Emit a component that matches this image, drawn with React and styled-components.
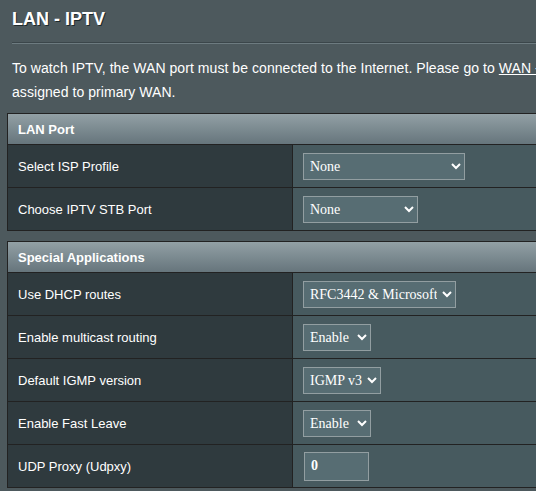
import React from "react";
import styled, { createGlobalStyle } from "styled-components";

const Global = createGlobalStyle`
  html, body {
    margin: 0;
    padding: 0;
    background: #4d595d;
    overflow: hidden;
  }
  body {
    font-family: "Liberation Sans", Arial, sans-serif;
    color: #ffffff;
  }
`;

const Page = styled.div`
  width: 760px;
  padding: 8px 0 0 7px;
  box-sizing: border-box;
`;

const Title = styled.div`
  margin-left: 5px;
  font-size: 18px;
  line-height: 23px;
  font-weight: bold;
  text-shadow: 1px 1px 0 #1f2a2d;
`;

const SplitLine = styled.div`
  margin: 11px 0 0 5px;
  height: 1px;
  background: #3b464a;
  border-bottom: 1px solid #6d7b80;
`;

const Intro = styled.div`
  margin: 12px 0 9px 5px;
  font-size: 14px;
  letter-spacing: 0.06px;
  line-height: 24px;
  white-space: nowrap;

  a {
    color: #ffffff;
    text-decoration: underline;
  }
`;

const FormTable = styled.div`
  width: 712px;
  border: 1px solid #222;
  margin-bottom: 10px;
`;

const Head = styled.div`
  height: 30px;
  display: flex;
  align-items: center;
  padding-left: 10px;
  font-size: 13px;
  font-weight: bold;
  background: linear-gradient(#92a0a5 0%, #66757c 100%);
  border-bottom: 1px solid #222;
`;

const Row = styled.div`
  display: grid;
  grid-template-columns: 285px 1fr;
  min-height: 42px;
  border-bottom: 1px solid #222;

  &:last-child {
    border-bottom: none;
  }
`;

const Label = styled.div`
  display: flex;
  align-items: center;
  padding-left: 10px;
  background: #2f3a3e;
  border-right: 1px solid #222;
  font-size: 13px;
`;

const Value = styled.div`
  display: flex;
  align-items: center;
  padding-left: 10px;
  background: #475a5f;
`;

const Select = styled.select`
  width: ${(p) => p.$w}px;
  height: 27px;
  margin: 0;
  padding: 0 2px;
  background-color: #576d73;
  border: 1px solid #929ea1;
  border-radius: 0;
  color: #ffffff;
  font-family: "Liberation Serif", "Times New Roman", serif;
  font-size: 14px;
  outline: none;
`;

const TextInput = styled.input`
  width: 65px;
  height: 29px;
  box-sizing: border-box;
  margin: 0 0 0 1px;
  padding: 0 6px;
  background-color: #576d73;
  border: 1px solid #929ea1;
  color: #ffffff;
  font-family: "Liberation Serif", "Times New Roman", serif;
  font-size: 14px;
  font-weight: bold;
  outline: none;
`;

const lanRows = [
  { label: "Select ISP Profile", value: "None", w: 162 },
  { label: "Choose IPTV STB Port", value: "None", w: 115 },
];

const specialRows = [
  { label: "Use DHCP routes", value: "RFC3442 & Microsoft", w: 153 },
  { label: "Enable multicast routing", value: "Enable", w: 68 },
  { label: "Default IGMP version", value: "IGMP v3", w: 78 },
  { label: "Enable Fast Leave", value: "Enable", w: 68 },
];

const SelectRow = ({ label, value, w }) => (
  <Row>
    <Label>{label}</Label>
    <Value>
      <Select $w={w} defaultValue={value}>
        <option>{value}</option>
      </Select>
    </Value>
  </Row>
);

export default function App() {
  return (
    <Page>
      <Global />
      <Title>LAN - IPTV</Title>
      <SplitLine />
      <Intro>
        To watch IPTV, the WAN port must be connected to the Internet. Please go to{" "}
        <a href="#">WAN - Dual WAN</a> to confirm that WAN port is
        <br />
        assigned to primary WAN.
      </Intro>

      <FormTable>
        <Head>LAN Port</Head>
        {lanRows.map((r) => (
          <SelectRow key={r.label} {...r} />
        ))}
      </FormTable>

      <FormTable>
        <Head>Special Applications</Head>
        {specialRows.map((r) => (
          <SelectRow key={r.label} {...r} />
        ))}
        <Row>
          <Label>UDP Proxy (Udpxy)</Label>
          <Value>
            <TextInput defaultValue="0" />
          </Value>
        </Row>
      </FormTable>
    </Page>
  );
}
